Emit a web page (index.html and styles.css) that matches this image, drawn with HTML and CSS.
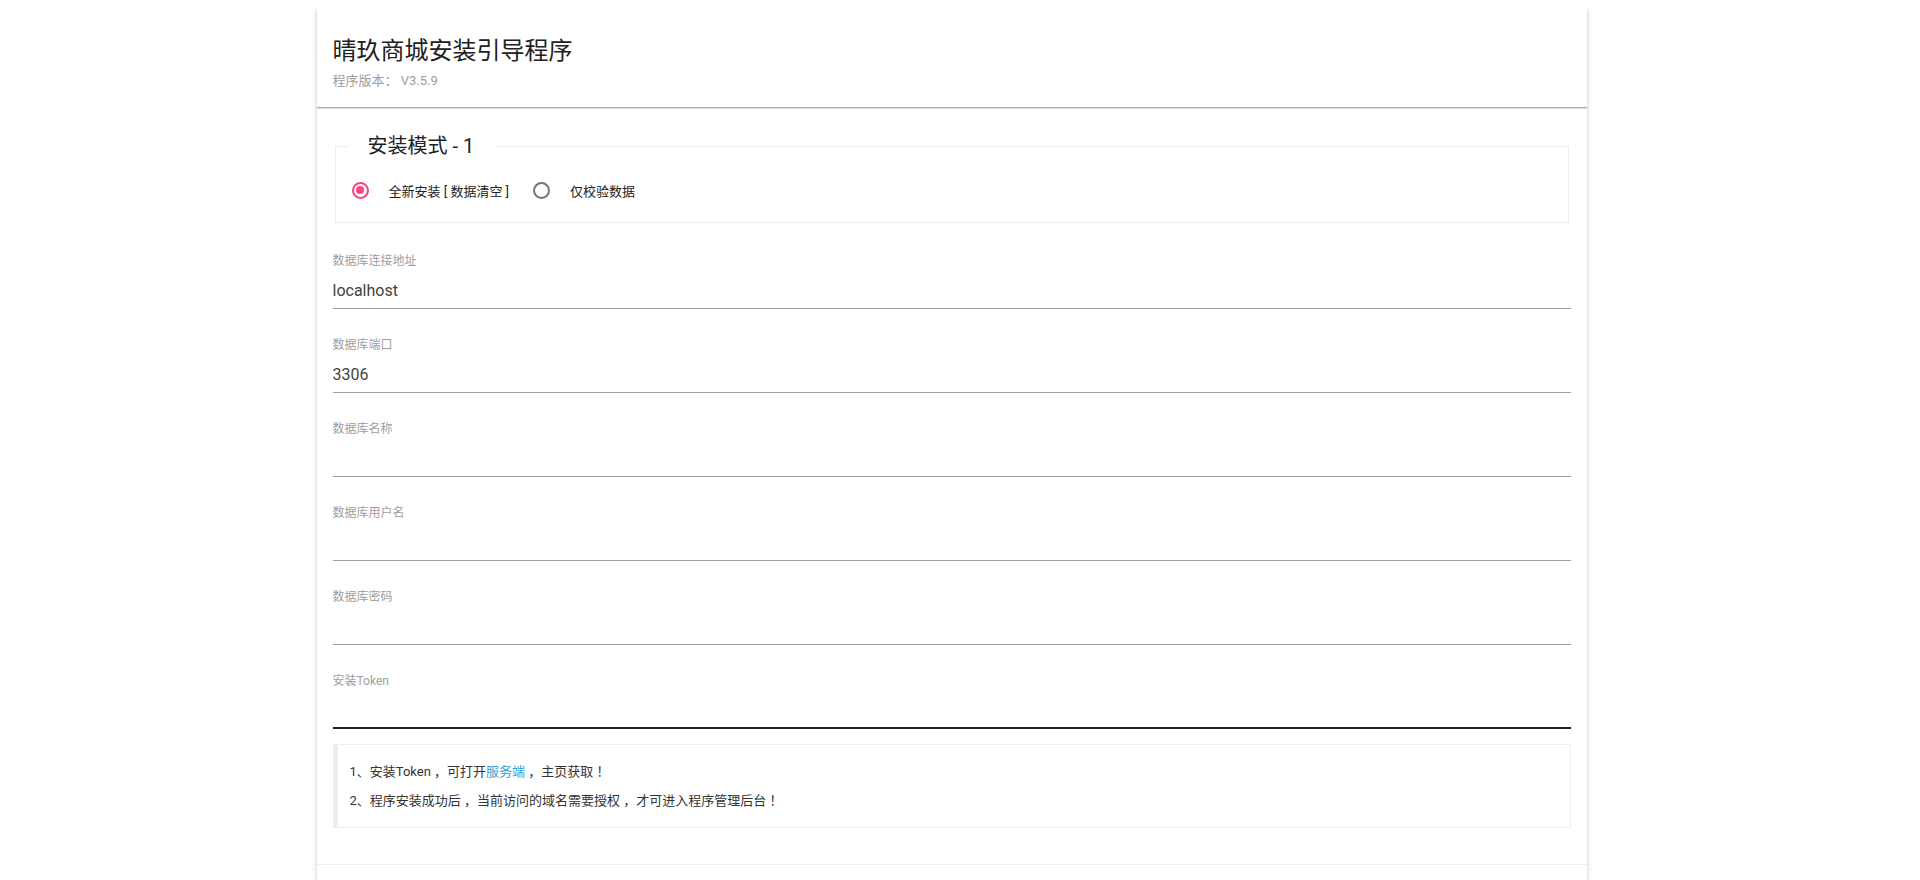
FILE: index.html
```html
<!DOCTYPE html>
<html lang="zh-CN">
<head>
    <meta charset="UTF-8">
    <meta name="viewport" content="width=device-width, initial-scale=1.0">
    <title>晴玖商城安装引导程序</title>

    <link rel="stylesheet" href="styles.css">
</head>
<body>
    <div class="install-card">
        <div class="card-header">
            <h1 class="card-title">晴玖商城安装引导程序</h1>
            <div class="card-subtitle">程序版本： V3.5.9</div>
        </div>

        <div class="card-body">
            <fieldset class="mode-box">
                <legend>安装模式 - 1</legend>
                <div class="radio-row">
                    <label class="radio-item">
                        <span class="radio checked"></span>
                        <span class="radio-text">全新安装 [ 数据清空 ]</span>
                    </label>
                    <label class="radio-item">
                        <span class="radio"></span>
                        <span class="radio-text">仅校验数据</span>
                    </label>
                </div>
            </fieldset>

            <div class="field">
                <label class="field-label">数据库连接地址</label>
                <input class="field-input" type="text" value="localhost">
            </div>
            <div class="field">
                <label class="field-label">数据库端口</label>
                <input class="field-input" type="text" value="3306">
            </div>
            <div class="field">
                <label class="field-label">数据库名称</label>
                <input class="field-input" type="text" value="">
            </div>
            <div class="field">
                <label class="field-label">数据库用户名</label>
                <input class="field-input" type="text" value="">
            </div>
            <div class="field">
                <label class="field-label">数据库密码</label>
                <input class="field-input" type="password" value="">
            </div>
            <div class="field">
                <label class="field-label">安装Token</label>
                <input class="field-input focused" type="text" value="">
            </div>

            <div class="tips">
                <p>1、安装Token ，可打开<a href="#">服务端</a> ，主页获取 ！</p>
                <p>2、程序安装成功后 ，当前访问的域名需要授权 ，才可进入程序管理后台 ！</p>
            </div>
        </div>

        <div class="card-footer"></div>
    </div>
</body>
</html>
```

FILE: styles.css
```css
body {
    margin: 8px 25px 8px 8px;
    background-color: #fff;
    font-family: Roboto, "Noto Sans CJK SC", sans-serif;
    color: #212121;
}

.install-card {
    max-width: 1270px;
    margin: 0 auto;
    background-color: #fff;
    box-shadow: 0 1px 6px rgba(0, 0, 0, 0.12), 0 1px 4px rgba(0, 0, 0, 0.1);
}

.card-header {
    padding: 28px 16px 17px;
    border-bottom: 1px solid #a8a8a8;
    box-shadow: 0 1px 1px rgba(0, 0, 0, 0.12);
}

.card-title {
    margin: 0;
    font-size: 24px;
    font-weight: normal;
    line-height: 30px;
    color: #212121;
}

.card-subtitle {
    margin-top: 6px;
    font-size: 13px;
    line-height: 18px;
    color: #9e9e9e;
}

.card-body {
    padding: 26px 16px 36px;
}

.mode-box {
    margin: 0 2px;
    padding: 22px 12px 22px;
    border: 1px solid #eee;
}

.mode-box legend {
    padding: 0 20px;
    font-size: 20px;
    line-height: 24px;
    color: #212121;
}

.radio-row {
    display: flex;
    align-items: center;
    height: 20px;
}

.radio-item {
    display: flex;
    align-items: center;
    margin-left: 4px;
    margin-right: 20px;
    font-size: 13px;
    color: #212121;
}

.radio {
    position: relative;
    width: 17px;
    height: 17px;
    border: 2px solid #757575;
    border-radius: 50%;
    box-sizing: border-box;
    margin-right: 20px;
}

.radio.checked {
    border-color: #ff4081;
}

.radio.checked::after {
    content: "";
    position: absolute;
    left: 2.5px;
    top: 2.5px;
    width: 8px;
    height: 8px;
    border-radius: 50%;
    background-color: #ff4081;
}

.field {
    margin-top: 30px;
}

.field + .field {
    margin-top: 28px;
}

.field-label {
    display: block;
    font-size: 12px;
    line-height: 16px;
    color: #9e9e9e;
}

.field-input {
    display: block;
    width: 100%;
    height: 36px;
    margin-top: 4px;
    padding: 0;
    border: none;
    border-bottom: 1px solid #9e9e9e;
    box-sizing: border-box;
    outline: none;
    background: transparent;
    font-family: Roboto, "Noto Sans CJK SC", sans-serif;
    font-size: 16px;
    color: #424242;
}

.field-input.focused {
    border-bottom: 2px solid #212121;
}

.tips {
    margin-top: 15px;
    padding: 12px 12px 12px;
    border: 1px solid #eee;
    border-left: 5px solid #eee;
}

.tips p {
    margin: 0;
    font-size: 13px;
    line-height: 29px;
    color: #333;
}

.tips a {
    color: #2da3dc;
    text-decoration: none;
}

.card-footer {
    height: 154px;
    border-top: 1px solid #eee;
}
```
